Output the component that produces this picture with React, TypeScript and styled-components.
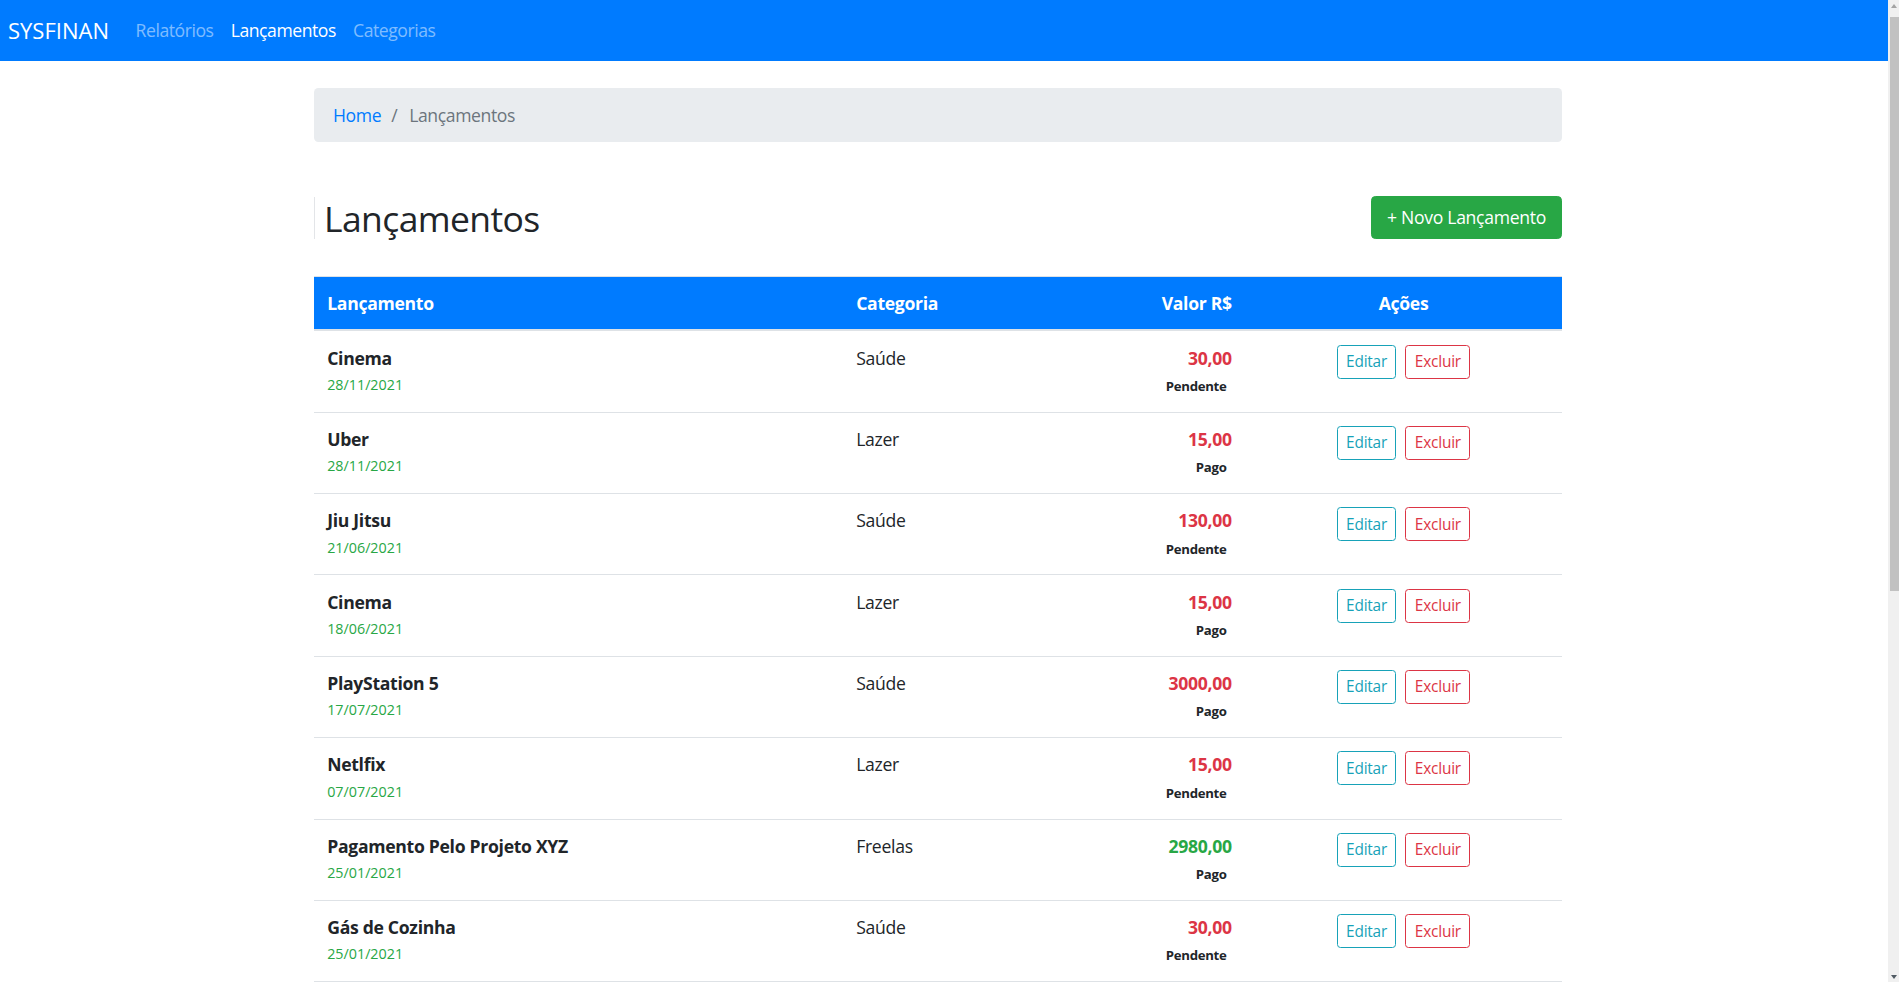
import React from 'react';
import styled, { createGlobalStyle } from 'styled-components';

interface Lancamento {
  descricao: string;
  data: string;
  categoria: string;
  valor: string;
  receita?: boolean;
  pago: boolean;
}

const lancamentos: Lancamento[] = [
  { descricao: 'Cinema', data: '28/11/2021', categoria: 'Saúde', valor: '30,00', pago: false },
  { descricao: 'Uber', data: '28/11/2021', categoria: 'Lazer', valor: '15,00', pago: true },
  { descricao: 'Jiu Jitsu', data: '21/06/2021', categoria: 'Saúde', valor: '130,00', pago: false },
  { descricao: 'Cinema', data: '18/06/2021', categoria: 'Lazer', valor: '15,00', pago: true },
  { descricao: 'PlayStation 5', data: '17/07/2021', categoria: 'Saúde', valor: '3000,00', pago: true },
  { descricao: 'Netlfix', data: '07/07/2021', categoria: 'Lazer', valor: '15,00', pago: false },
  { descricao: 'Pagamento Pelo Projeto XYZ', data: '25/01/2021', categoria: 'Freelas', valor: '2980,00', receita: true, pago: true },
  { descricao: 'Gás de Cozinha', data: '25/01/2021', categoria: 'Saúde', valor: '30,00', pago: false },
  { descricao: 'Mercado', data: '20/01/2021', categoria: 'Saúde', valor: '250,00', pago: true },
  { descricao: 'Academia', data: '15/01/2021', categoria: 'Saúde', valor: '90,00', pago: true },
  { descricao: 'Spotify', data: '10/01/2021', categoria: 'Lazer', valor: '19,90', pago: false },
  { descricao: 'Salário', data: '05/01/2021', categoria: 'Freelas', valor: '4500,00', receita: true, pago: true },
  { descricao: 'Internet', data: '05/01/2021', categoria: 'Lazer', valor: '100,00', pago: true },
  { descricao: 'Farmácia', data: '03/01/2021', categoria: 'Saúde', valor: '45,00', pago: false },
];

// Global
const GlobalStyle = createGlobalStyle`
  body {
    margin: 0;
    font-family: "Open Sans", "Noto Sans", sans-serif;
    font-size: 17.6px;
    line-height: 1.5;
    color: #212529;
    background: #fff;
  }
  * {
    box-sizing: border-box;
  }
`;

// Page frame (leaves room for the scrollbar strip on the right)
const Page = styled.div`
  padding-right: 11px;
`;

const ScrollTrack = styled.div`
  position: fixed;
  top: 0;
  right: 0;
  width: 11px;
  height: 100vh;
  background: #f0f0f0;
  display: flex;
  flex-direction: column;
  align-items: flex-end;
`;

const ScrollArrow = styled.div<{ $down?: boolean }>`
  width: 0;
  height: 0;
  margin: ${(p) => (p.$down ? 'auto 2px 3px 0' : '4px 2px 0 0')};
  border-left: 3.5px solid transparent;
  border-right: 3.5px solid transparent;
  ${(p) => (p.$down ? 'border-top: 4px solid #505a63;' : 'border-bottom: 4px solid #a3a3a3;')}
`;

const ScrollThumb = styled.div`
  width: 9px;
  height: 574px;
  margin-top: 9px;
  background: #c1c1c1;
`;

// Navbar
const Navbar = styled.nav`
  height: 61px;
  background-color: #007bff;
  display: flex;
  align-items: center;
  padding: 0 8px;
`;

const Brand = styled.a`
  font-size: 22px;
  color: #fff;
  margin-right: 18px;
`;

const NavLink = styled.a<{ $active?: boolean }>`
  color: ${(p) => (p.$active ? '#fff' : 'rgba(255, 255, 255, 0.5)')};
  padding: 8px 8.6px;
  letter-spacing: -0.45px;
`;

// Page
const Container = styled.main`
  width: 1260px;
  margin: 0 auto;
  padding: 27px 12px 40px 0;
`;

const Breadcrumb = styled.ol`
  list-style: none;
  margin: 0;
  display: flex;
  align-items: center;
  height: 54px;
  padding: 0 19px;
  background-color: #e9ecef;
  border-radius: 4.4px;
  letter-spacing: -0.4px;
`;

const Crumb = styled.li<{ $active?: boolean }>`
  color: ${(p) => (p.$active ? '#6c757d' : '#007bff')};
`;

const Separator = styled.span`
  color: #6c757d;
  padding: 0 12px 0 10px;
`;

const PageHeader = styled.div`
  margin-top: 54px;
  display: flex;
  align-items: center;
  justify-content: space-between;
`;

const Title = styled.h2`
  margin: 0;
  font-size: 35.5px;
  font-weight: 500;
  line-height: 42px;
  padding-left: 9px;
  border-left: 1px solid #e3e5e8;
  letter-spacing: -0.6px;
`;

const NewButton = styled.button`
  font-family: inherit;
  font-size: 17.6px;
  line-height: 26.4px;
  color: #fff;
  background-color: #28a745;
  border: 1px solid #28a745;
  border-radius: 4.4px;
  height: 43px;
  width: 191px;
  padding: 0;
  letter-spacing: -0.3px;
`;

// Table
const Table = styled.table`
  width: 100%;
  margin-top: 37px;
  border-collapse: collapse;
`;

const Th = styled.th<{ $align?: 'left' | 'right' | 'center'; $width?: number }>`
  background-color: #007bff;
  color: #fff;
  font-weight: 700;
  text-align: ${(p) => p.$align || 'left'};
  width: ${(p) => (p.$width ? `${p.$width}px` : 'auto')};
  padding: 13px 13.2px;
  border-top: 1px solid #dee2e6;
  border-bottom: 2px solid #dee2e6;
  letter-spacing: -0.3px;
`;

const Td = styled.td<{ $align?: 'left' | 'right' | 'center' }>`
  padding: 13.2px;
  text-align: ${(p) => p.$align || 'left'};
  vertical-align: top;
  border-top: 1px solid #dee2e6;
  letter-spacing: -0.3px;
`;

const Descricao = styled.strong`
  display: block;
  font-weight: 700;
`;

const Data = styled.small`
  display: block;
  font-size: 14.3px;
  line-height: 27.6px;
  color: #28a745;
  letter-spacing: 0;
`;

const Valor = styled.strong<{ $receita?: boolean }>`
  display: block;
  font-weight: 700;
  color: ${(p) => (p.$receita ? '#28a745' : '#dc3545')};
`;

const Badge = styled.span`
  display: inline-block;
  font-size: 13.2px;
  font-weight: 700;
  line-height: 1;
  padding: 6px 5.3px 4px;
  color: #212529;
`;

const ActionButton = styled.button<{ $variant: 'info' | 'danger' }>`
  font-family: inherit;
  font-size: 15.4px;
  line-height: 1.5;
  height: 34px;
  padding: 0 8.4px;
  margin: 0 4.5px;
  background: transparent;
  border-radius: 3.5px;
  color: ${(p) => (p.$variant === 'info' ? '#17a2b8' : '#dc3545')};
  border: 1px solid ${(p) => (p.$variant === 'info' ? '#17a2b8' : '#dc3545')};
  letter-spacing: -0.2px;
`;

const App: React.FC = () => {
  return (
    <Page>
      <GlobalStyle />
      <Navbar>
        <Brand>SYSFINAN</Brand>
        <NavLink>Relatórios</NavLink>
        <NavLink $active>Lançamentos</NavLink>
        <NavLink>Categorias</NavLink>
      </Navbar>

      <Container>
        <Breadcrumb>
          <Crumb>Home</Crumb>
          <Separator>/</Separator>
          <Crumb $active>Lançamentos</Crumb>
        </Breadcrumb>

        <PageHeader>
          <Title>Lançamentos</Title>
          <NewButton>+ Novo Lançamento</NewButton>
        </PageHeader>

        <Table>
          <thead>
            <tr>
              <Th $width={529}>Lançamento</Th>
              <Th $width={250}>Categoria</Th>
              <Th $align="right" $width={152}>Valor R$</Th>
              <Th $align="center">Ações</Th>
            </tr>
          </thead>
          <tbody>
            {lancamentos.map((l, i) => (
              <tr key={i}>
                <Td>
                  <Descricao>{l.descricao}</Descricao>
                  <Data>{l.data}</Data>
                </Td>
                <Td>{l.categoria}</Td>
                <Td $align="right">
                  <Valor $receita={l.receita}>{l.valor}</Valor>
                  <Badge>{l.pago ? 'Pago' : 'Pendente'}</Badge>
                </Td>
                <Td $align="center">
                  <ActionButton $variant="info">Editar</ActionButton>
                  <ActionButton $variant="danger">Excluir</ActionButton>
                </Td>
              </tr>
            ))}
          </tbody>
        </Table>
      </Container>

      <ScrollTrack>
        <ScrollArrow />
        <ScrollThumb />
        <ScrollArrow $down />
      </ScrollTrack>
    </Page>
  );
};

export default App;
